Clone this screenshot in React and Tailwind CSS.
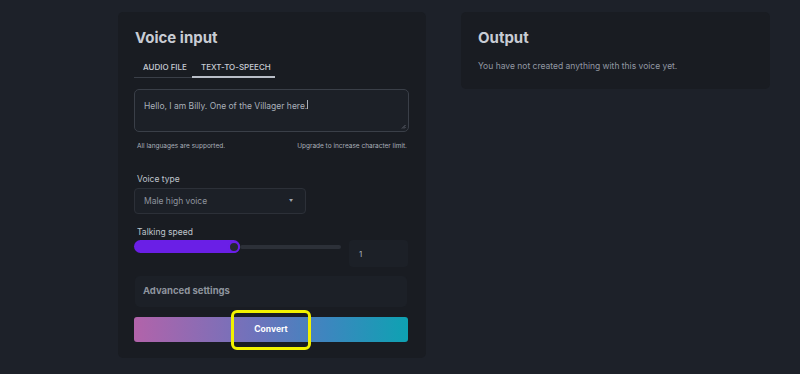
export default function App() {
  return (
    <div className="w-[800px] h-[374px] bg-[#1d2129] flex items-start gap-[35px] pl-[118px] pt-[12px] overflow-hidden" style={{ fontFamily: "Inter, 'Noto Sans', sans-serif" }}>
      <div className="w-[308px] h-[346px] bg-[#191c22] rounded-[5px] px-[16px] pt-[17px] flex flex-col">
        <h2 className="text-[15px] font-bold text-[#c8ccd4] leading-[18px] pl-[1px]">Voice input</h2>
        <div className="mt-[15px] flex w-[141px] border-b border-[#3a3f48] text-[8px] font-medium text-[#c8ccd4] leading-[10px]">
          <div className="w-[58px] pl-[9px] pb-[4px]">AUDIO FILE</div>
          <div className="w-[83px] pl-[9px] pb-[4px] border-b-2 border-[#b9bec8] -mb-[1px]">TEXT-TO-SPEECH</div>
        </div>
        <div className="mt-[11px] h-[43px] w-[275px] rounded-[5px] border border-[#3a3f48] bg-[#1c2027] px-[9px] pt-[8px] relative leading-[11px]">
          <span className="text-[8.5px] text-[#aab0ba] leading-[11px]">Hello, I am Billy. One of the Villager here.</span><span className="inline-block w-[1px] h-[9px] bg-[#aab0ba] align-middle"></span>
          <svg className="absolute right-[2px] bottom-[2px]" width="5" height="5" viewBox="0 0 5 5"><path d="M1 4.5L4.5 1M3 4.5L4.5 3" stroke="#7a808a" strokeWidth="0.7" /></svg>
        </div>
        <div className="mt-[10px] flex justify-between px-[3px] text-[6.5px] text-[#aab0ba] leading-[8px]">
          <span>All languages are supported.</span>
          <span>Upgrade to increase character limit.</span>
        </div>
        <div className="mt-[24px] pl-[3px] text-[8.5px] text-[#bfc4cc] leading-[10px]">Voice type</div>
        <div className="mt-[4px] w-[172px] h-[26px] rounded-[4px] border border-[#2c3038] bg-[#1c2027] flex items-center justify-between pl-[9px] pr-[12px]">
          <span className="text-[8.5px] text-[#8e949e]">Male high voice</span>
          <span className="text-[4px] text-[#a0a6b0]">▼</span>
        </div>
        <div className="mt-[13px] pl-[3px] text-[8.5px] text-[#bfc4cc] leading-[10px]">Talking speed</div>
        <div className="mt-[3px] flex items-start">
          <div className="w-[207px] h-[13px] relative flex items-center">
            <div className="absolute left-[106px] right-0 h-[4px] rounded-full bg-[#2c3038]"></div>
            <div className="relative w-[106px] h-[13px] rounded-full bg-[#6a1fe6]"></div>
            <div className="absolute left-[94px] w-[12px] h-[12px] rounded-full bg-[#252830] border-[2px] border-[#6a1fe6]"></div>
          </div>
          <div className="ml-[8px] w-[59px] h-[27px] rounded-[4px] bg-[#1c2027] flex items-center pl-[10px] text-[8px] text-[#aab0ba]">1</div>
        </div>
        <div className="mt-[9px] ml-[1px] w-[272px] h-[31px] rounded-[5px] bg-[#1c2027] flex items-center pl-[8px]">
          <span className="text-[9.5px] font-bold text-[#8e949e]">Advanced settings</span>
        </div>
        <div className="mt-[10px] w-[274px] h-[25px] rounded-[3px] bg-[linear-gradient(90deg,#b263aa_0%,#6d73bc_45%,#3d86bf_70%,#0ea2b2_100%)] flex items-center justify-center relative">
          <span className="text-[8.5px] font-bold text-white">Convert</span>
          <div className="absolute left-[97px] top-[-7px] w-[80px] h-[40px] rounded-[6px] border-[3px] border-[#f2f200]"></div>
        </div>
      </div>
      <div className="w-[309px] h-[77px] bg-[#191c22] rounded-[5px] px-[17px] pt-[17px]">
        <h2 className="text-[15px] font-bold text-[#c8ccd4] leading-[18px]">Output</h2>
        <p className="mt-[14px] text-[8.5px] text-[#9298a2] leading-[10px]">You have not created anything with this voice yet.</p>
      </div>
    </div>
  );
}
